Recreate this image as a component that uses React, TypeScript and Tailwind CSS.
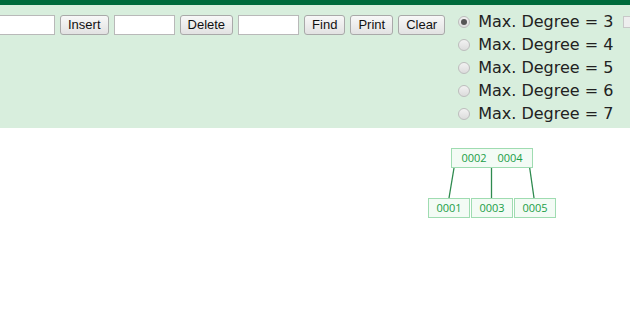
import React from 'react';

const btn =
  'h-5 rounded-[3px] border border-[#a9a9a9] bg-gradient-to-b from-[#f8f8f8] to-[#e2e2e2] px-[7px] text-[13px] leading-[18px] text-[#111] font-["Liberation_Sans",Arial,sans-serif]';
const field = 'h-5 w-[61px] border border-[#b9b9b9] bg-white';

const degrees = [3, 4, 5, 6, 7];

function Node({ x, y, w, keys }: { x: number; y: number; w: number; keys: string[] }) {
  return (
    <div
      className="absolute flex h-[20px] items-center justify-around border border-[#9fdcb1] bg-[#f3fbf5] px-1 text-[11px] text-[#1a9e48] font-['Open_Sans',sans-serif]"
      style={{ left: x, top: y, width: w }}
    >
      {keys.map((k) => (
        <span key={k}>{k}</span>
      ))}
    </div>
  );
}

export default function App() {
  return (
    <div className="relative h-[333px] w-[630px] overflow-hidden bg-white">
      <div className="h-[5px] bg-[#006b3c]" />
      <div className="flex h-[123px] bg-[#d8eedd] pt-[10px]">
        <div className="-ml-[6px] flex h-5 shrink-0 items-start gap-[5px]">
          <input className={field} />
          <button className={btn}>Insert</button>
          <input className={field} />
          <button className={btn}>Delete</button>
          <input className={field} />
          <button className={btn}>Find</button>
          <button className={btn}>Print</button>
          <button className={btn}>Clear</button>
        </div>
        <div className="ml-[13px] -mt-[5px] flex shrink-0 flex-col">
          {degrees.map((d) => (
            <label
              key={d}
              className="flex h-[23px] items-center gap-[8px] whitespace-nowrap text-[16px] text-[#222] font-['DejaVu_Sans',sans-serif]"
            >
              <span className="flex h-[12px] w-[12px] shrink-0 items-center justify-center rounded-full border border-[#bdbdbd] bg-gradient-to-b from-[#f2f2f2] to-[#dcdcdc]">
                {d === 3 && <span className="h-[6px] w-[6px] rounded-full bg-[#555]" />}
              </span>
              Max. Degree = {d}
            </label>
          ))}
        </div>
        <div className="ml-[10px] mt-[1px] h-[12px] w-[12px] shrink-0 border border-[#c8c8c8] bg-[#eee]" />
      </div>

      <svg className="absolute left-0 top-0" width="630" height="333">
        <g stroke="#2f8a4f" strokeWidth="1.3">
          <line x1="456" y1="156" x2="449" y2="198" />
          <line x1="491.5" y1="157" x2="491.5" y2="198" />
          <line x1="528" y1="156" x2="534" y2="198" />
        </g>
      </svg>
      <Node x={451} y={148} w={82} keys={['0002', '0004']} />
      <Node x={428} y={198} w={42} keys={['0001']} />
      <Node x={471} y={198} w={42} keys={['0003']} />
      <Node x={514} y={198} w={42} keys={['0005']} />
    </div>
  );
}
